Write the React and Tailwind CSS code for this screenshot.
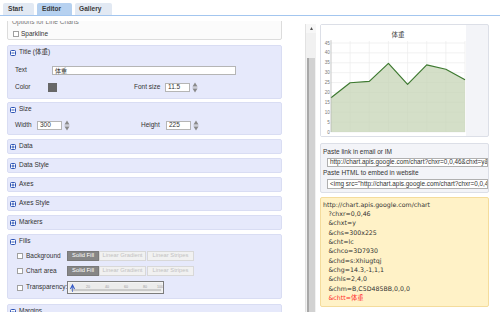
import React from "react";

const SANS = "font-['Liberation_Sans','Noto_Sans_CJK_SC',sans-serif]";

function Toggle({ open }) {
  return (
    <svg width="6" height="6" viewBox="0 0 6 6" className="shrink-0">
      <rect x="0.5" y="0.5" width="5" height="5" rx="1" fill="#fff" stroke="#2f55b5" strokeWidth="1" />
      <line x1="1.5" y1="3" x2="4.5" y2="3" stroke="#2f55b5" strokeWidth="1" />
      {!open && <line x1="3" y1="1.5" x2="3" y2="4.5" stroke="#2f55b5" strokeWidth="1" />}
    </svg>
  );
}

function Check() {
  return <span className="block h-[6px] w-[6px] shrink-0 border border-[#a0a0a0] bg-white" />;
}

function Spinner() {
  return (
    <svg width="6" height="11" viewBox="0 0 6 11" className="ml-[2px] shrink-0">
      <polygon points="3,0.5 5.5,4.5 0.5,4.5" fill="#8a8a8a" />
      <line x1="0.5" y1="5.5" x2="5.5" y2="5.5" stroke="#bbb" strokeWidth="0.6" />
      <polygon points="3,10.5 5.5,6.5 0.5,6.5" fill="#8a8a8a" />
    </svg>
  );
}

function Header({ title, open }) {
  return (
    <div className="flex h-[13px] items-center gap-[3px] pl-[2px] text-[6.5px] leading-none text-[#333]">
      <Toggle open={open} />
      <span>{title}</span>
    </div>
  );
}

function Collapsed({ title }) {
  return (
    <div className="rounded-[2px] border border-[#d9ddf3] bg-[#e6e9fb]">
      <Header title={title} open={false} />
    </div>
  );
}

function FillButtons() {
  return (
    <div className="flex h-[10px] text-[5.8px] leading-none">
      <span className="flex w-[32px] items-center justify-center border border-[#7a7a7a] bg-[#868686] text-white">Solid Fill</span>
      <span className="flex w-[47px] items-center justify-center border border-[#d8d8d8] bg-[#f1f1f1] text-[#c2c2c2]">Linear Gradient</span>
      <span className="ml-[1px] flex w-[47px] items-center justify-center border border-[#d8d8d8] bg-[#f1f1f1] text-[#c2c2c2]">Linear Stripes</span>
    </div>
  );
}

function Slider() {
  return (
    <svg width="97" height="13" viewBox="0 0 97 13">
      <rect x="0.5" y="0.5" width="96" height="12" fill="#ececec" stroke="#7c7c7c" />
      <rect x="1.5" y="1.5" width="94" height="10" fill="none" stroke="#fafafa" strokeWidth="0.6" />
      <line x1="4" y1="9" x2="94" y2="9" stroke="#9a9a9a" strokeWidth="0.8" />
      {[21, 40, 59, 78, 93].map((x, i) => (
        <text key={i} x={x} y="6.5" fontSize="3.6" fill="#9a9a9a" textAnchor="middle" fontFamily="Liberation Sans">
          {[20, 40, 60, 80, 100][i]}
        </text>
      ))}
      <polyline points="3.5,8 5.5,4 7.5,8" fill="none" stroke="#2f55c5" strokeWidth="1.1" />
      <line x1="5.5" y1="5" x2="5.5" y2="11" stroke="#2f55c5" strokeWidth="0.7" />
    </svg>
  );
}

function Chart() {
  const vals = [17.3, 24.9, 25.6, 34.7, 24.1, 33.9, 31.7, 26.4];
  const x0 = 10, x1 = 144, y0 = 107;
  const sy = 91 / 46;
  const pts = vals.map((v, i) => [x0 + (i * (x1 - x0)) / 7, y0 - v * sy]);
  const line = pts.map((p) => p.join(",")).join(" ");
  const area = `${x0},${y0} ${line} ${x1},${y0}`;
  return (
    <svg width="145" height="111" viewBox="0 0 145 111" className="block">
      <rect width="145" height="111" fill="#fff" />
      {Array.from({ length: 10 }).map((_, k) => {
        const y = y0 - k * 5 * sy;
        return <line key={"h" + k} x1={x0} y1={y} x2={x1} y2={y} stroke="#ececec" strokeWidth="0.7" />;
      })}
      {Array.from({ length: 8 }).map((_, k) => {
        const x = x0 + k * 19.14;
        return <line key={"v" + k} x1={x} y1={16} x2={x} y2={y0} stroke="#ececec" strokeWidth="0.7" />;
      })}
      <polygon points={area} fill="#c5d4b5" fillOpacity="0.75" />
      <polyline points={line} fill="none" stroke="#3d7930" strokeWidth="1.2" strokeLinejoin="round" />
      <line x1={x0} y1="15" x2={x0} y2={y0} stroke="#b0b0b0" strokeWidth="0.6" />
      {Array.from({ length: 10 }).map((_, k) => {
        const y = y0 - k * 5 * sy;
        return (
          <text key={"t" + k} x="8.8" y={y + 1.6} fontSize="4.6" fill="#777" textAnchor="end" fontFamily="Liberation Sans">
            {k * 5}
          </text>
        );
      })}
      <text x="77" y="11.5" fontSize="6.5" fill="#444" textAnchor="middle" fontFamily="Noto Sans CJK SC">体重</text>
    </svg>
  );
}

export default function App() {
  const lines = [
    "?chxr=0,0,46",
    "&chxt=y",
    "&chs=300x225",
    "&cht=lc",
    "&chco=3D7930",
    "&chd=s:Xhiugtqj",
    "&chg=14.3,-1,1,1",
    "&chls=2,4,0",
    "&chm=B,C5D485BB,0,0,0",
  ];
  return (
    <div className={`${SANS} relative h-[312px] w-[500px] overflow-hidden bg-white text-[#333]`}>
      {/* Tabs */}
      <div className="flex h-[16px] items-end gap-[3px] border-b-[1.5px] border-[#a3c6ef] pl-[3px]">
        <div className="flex h-[12px] w-[31px] items-center rounded-t-[2px] bg-[#e2e9f3] pl-[5px] text-[6.6px] font-bold leading-none text-[#3a3a3a]">Start</div>
        <div className="flex h-[12px] w-[35px] items-center rounded-t-[2px] bg-[#b6d1f0] pl-[5px] text-[6.6px] font-bold leading-none text-[#3a3a3a]">Editor</div>
        <div className="flex h-[12px] w-[37px] items-center rounded-t-[2px] bg-[#e2e9f3] pl-[4px] text-[6.6px] font-bold leading-none text-[#3a3a3a]">Gallery</div>
      </div>

      <div className="flex">
        {/* Left pane */}
        <div className="w-[305px] pt-[5px] pl-[7px]">
          <div className="h-[291px] w-[275px] overflow-hidden">
            <div className="flex flex-col">
              <div className="-mt-[5px] h-[24px] rounded-[2px] border border-[#dcdcdc] bg-[#fbfbfb]">
                <div className="h-[10px] pl-[4px] text-[6.5px] leading-[10px] text-[#777]">Options for Line Charts</div>
                <div className="mt-[4px] flex items-center gap-[2px] pl-[5px] text-[6.5px] leading-none">
                  <Check />
                  <span>Sparkline</span>
                </div>
              </div>

              <div className="mt-[5px] h-[54px] rounded-[2px] border border-[#d9ddf3] bg-[#e6e9fb]">
                <Header title="Title (体重)" open />
                <div className="mt-[7px] flex h-[9px] items-center pl-[7px] text-[6.5px] leading-none">
                  <span className="w-[37px]">Text</span>
                  <div className="flex h-[9px] w-[184px] items-center border border-[#b5b5b5] bg-white pl-[2px] text-[6px]">体重</div>
                </div>
                <div className="mt-[8px] flex h-[9px] items-center pl-[7px] text-[6.5px] leading-none">
                  <span className="w-[33px]">Color</span>
                  <span className="block h-[9px] w-[9px] bg-[#676767]" />
                  <span className="ml-[77px] w-[31px]">Font size</span>
                  <div className="flex h-[9px] w-[25px] items-center border border-[#b5b5b5] bg-white pl-[2px]">11.5</div>
                  <Spinner />
                </div>
              </div>

              <div className="mt-[3px] h-[33px] rounded-[2px] border border-[#d9ddf3] bg-[#e6e9fb]">
                <Header title="Size" open />
                <div className="mt-[5px] flex h-[9px] items-center pl-[7px] text-[6.5px] leading-none">
                  <span className="w-[22px]">Width</span>
                  <div className="flex h-[9px] w-[25px] items-center border border-[#b5b5b5] bg-white pl-[2px]">300</div>
                  <Spinner />
                  <span className="ml-[71px] w-[25px]">Height</span>
                  <div className="flex h-[9px] w-[25px] items-center border border-[#b5b5b5] bg-white pl-[2px]">225</div>
                  <Spinner />
                </div>
              </div>

              <div className="mt-[4px] flex flex-col gap-[4px]">
                <Collapsed title="Data" />
                <Collapsed title="Data Style" />
                <Collapsed title="Axes" />
                <Collapsed title="Axes Style" />
                <Collapsed title="Markers" />
              </div>

              <div className="mt-[4px] h-[65px] rounded-[2px] border border-[#d9ddf3] bg-[#e6e9fb]">
                <Header title="Fills" open />
                <div className="mt-[3px] flex items-center pl-[9px] text-[6.5px] leading-none">
                  <Check />
                  <span className="ml-[3px] w-[41px]">Background</span>
                  <FillButtons />
                </div>
                <div className="mt-[5px] flex items-center pl-[9px] text-[6.5px] leading-none">
                  <Check />
                  <span className="ml-[3px] w-[41px]">Chart area</span>
                  <FillButtons />
                </div>
                <div className="mt-[5px] flex items-center pl-[9px] text-[6.5px] leading-none">
                  <Check />
                  <span className="ml-[3px] w-[41px] whitespace-nowrap">Transparency:</span>
                  <Slider />
                </div>
              </div>

              <div className="mt-[5px] h-[30px] rounded-[2px] border border-[#d9ddf3] bg-[#e6e9fb]">
                <Header title="Margins" open />
              </div>
            </div>
          </div>
        </div>

        {/* Scrollbar */}
        <div className="mt-[8px] flex h-[288px] w-[11px] flex-col border-l border-[#e2e2e2] bg-[#f1f1f1]">
          <div className="flex h-[9px] items-center justify-center bg-[#f7f7f7]">
            <svg width="3" height="3" viewBox="0 0 3 3"><polygon points="1.5,0 3,3 0,3" fill="#555" /></svg>
          </div>
          <div className="h-[25px]" />
          <div className="ml-[1px] mr-[1px] flex-1 border-l-[2px] border-[#a8a8a8] bg-[#d2d2d2]" />
        </div>

        {/* Right pane */}
        <div className="ml-[4px] mt-[8px] flex w-[169px] flex-col">
          <div className="h-[113px] rounded-[2px] border border-[#dcdfe7] bg-[#f3f4f8]">
            <Chart />
          </div>

          <div className="mt-[6px] h-[50px] rounded-[2px] border border-[#dcdfe7] bg-[#f3f4f8] pl-[2px] text-[6.5px] leading-none text-[#333]">
            <div className="mt-[5px] h-[8px]">Paste link in email or IM</div>
            <div className="ml-[4px] mt-[1px] flex h-[9px] items-center overflow-hidden whitespace-nowrap border border-[#b0b0b0] bg-white pl-[2px] text-[6.4px]">
              http://chart.apis.google.com/chart?chxr=0,0,46&amp;chxt=y&amp;chs=300x225
            </div>
            <div className="mt-[2px] h-[8px] leading-[8px]">Paste HTML to embed in website</div>
            <div className="ml-[4px] mt-[2px] flex h-[10px] items-center overflow-hidden whitespace-nowrap border border-[#b0b0b0] bg-white pl-[2px] text-[6.4px]">
              &lt;img src="http://chart.apis.google.com/chart?chxr=0,0,46&amp;chxt=y"
            </div>
          </div>

          <div className="mt-[4px] h-[110px] rounded-[2px] border border-[#f4dc9c] bg-[#fff2c7] pl-[2px] pt-[1.5px] font-['DejaVu_Sans','Noto_Sans_CJK_SC',sans-serif] text-[6.25px] leading-[9.35px] text-[#333]">
            <div>http://chart.apis.google.com/chart</div>
            {lines.map((t) => (
              <div key={t} className="pl-[5.5px]">{t}</div>
            ))}
            <div className="pl-[5.5px] text-[#ff2a2a]">&amp;chtt=体重</div>
          </div>
        </div>
      </div>
    </div>
  );
}
